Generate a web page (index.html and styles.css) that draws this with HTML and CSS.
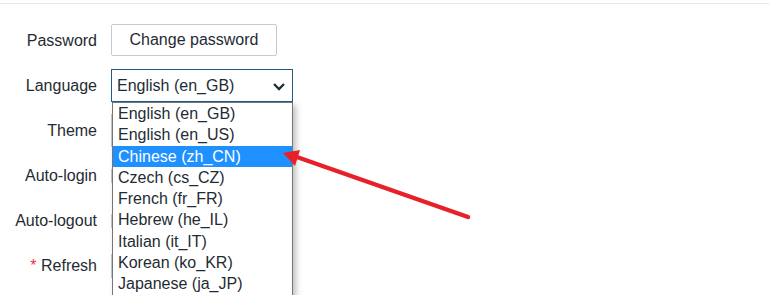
FILE: index.html
```html
<!DOCTYPE html>
<html lang="en">
<head>
  <meta charset="UTF-8" />
  <title>User profile</title>
  <link rel="stylesheet" href="styles.css">
</head>
<body>
  <div class="topline"></div>
  <form class="profile-form">
    <label class="form-label">Password</label>
    <div class="form-field">
      <button type="button" class="btn">Change password</button>
    </div>

    <label class="form-label">Language</label>
    <div class="form-field">
      <div class="select focused">
        <span class="select-value">English (en_GB)</span>
        <svg class="chevron" width="14" height="9" viewBox="0 0 14 9">
          <path d="M2 2 L7 7 L12 2" fill="none" stroke="#1f2c33" stroke-width="2.3" />
        </svg>
        <ul class="options">
          <li>English (en_GB)</li>
          <li>English (en_US)</li>
          <li class="active">Chinese (zh_CN)</li>
          <li>Czech (cs_CZ)</li>
          <li>French (fr_FR)</li>
          <li>Hebrew (he_IL)</li>
          <li>Italian (it_IT)</li>
          <li>Korean (ko_KR)</li>
          <li>Japanese (ja_JP)</li>
        </ul>
      </div>
    </div>

    <label class="form-label">Theme</label>
    <div class="form-field">
      <div class="select"></div>
    </div>

    <label class="form-label">Auto-login</label>
    <div class="form-field center">
      <span class="checkbox"></span>
    </div>

    <label class="form-label">Auto-logout</label>
    <div class="form-field center">
      <span class="checkbox"></span>
    </div>

    <label class="form-label"><span class="required">*</span> Refresh</label>
    <div class="form-field center">
      <span class="input"></span>
    </div>
  </form>

  <svg class="arrow" width="769" height="295" viewBox="0 0 769 295">
    <line x1="468" y1="217" x2="294" y2="156" stroke="#e8202a" stroke-width="4.5" stroke-linecap="round" />
    <polygon points="283,153 300,150 295,166" fill="#e8202a" />
  </svg>
</body>
</html>
```

FILE: styles.css
```css
body {
  margin: 0;
  height: 295px;
  overflow: hidden;
  background: #fff;
  font-family: "Liberation Sans", Arial, sans-serif;
  font-size: 16px;
  color: #1f2c33;
}

* {
  box-sizing: border-box;
}

.topline {
  margin-top: 3px;
  height: 1px;
  background: #e6e6e6;
}

.profile-form {
  display: grid;
  grid-template-columns: 97px auto;
  grid-auto-rows: 33px;
  column-gap: 14px;
  row-gap: 12px;
  padding-top: 20px;
}

.form-label {
  text-align: right;
  align-self: center;
  white-space: nowrap;
}

.required {
  color: #e33734;
}

.form-field {
  position: relative;
  display: flex;
  align-items: flex-start;
}

.form-field.center {
  align-items: center;
}

.btn {
  height: 32px;
  width: 166px;
  padding: 0;
  border: 1px solid #c5cacf;
  border-radius: 2px;
  background: #fff;
  font-family: inherit;
  font-size: 16px;
  color: #1f2c33;
}

.select {
  position: relative;
  width: 182px;
  height: 33px;
  border: 1px solid #c5cacf;
  display: flex;
  align-items: center;
  padding-left: 5px;
  background: #fff;
}

.select.focused {
  border-color: #235b85;
  z-index: 2;
}

.chevron {
  position: absolute;
  right: 6px;
  top: 12px;
}

.checkbox {
  width: 16px;
  height: 16px;
  border: 1px solid #c5cacf;
  border-radius: 2px;
}

.input {
  width: 60px;
  height: 24px;
  border: 1px solid #c5cacf;
}

/* open dropdown of the language select */
.options {
  position: absolute;
  top: 32px;
  left: 0;
  width: 181px;
  margin: 0;
  padding: 0 0 20px;
  list-style: none;
  background: #fff;
  border: 1px solid #767676;
  box-shadow: 3px 3px 6px rgba(0, 0, 0, 0.25);
}

.options li {
  height: 21.3px;
  line-height: 21px;
  padding-left: 5px;
  white-space: nowrap;
}

.options li.active {
  background: #1e90ff;
  color: #fff;
}

.arrow {
  position: absolute;
  left: 0;
  top: 0;
  pointer-events: none;
  z-index: 5;
}
```
